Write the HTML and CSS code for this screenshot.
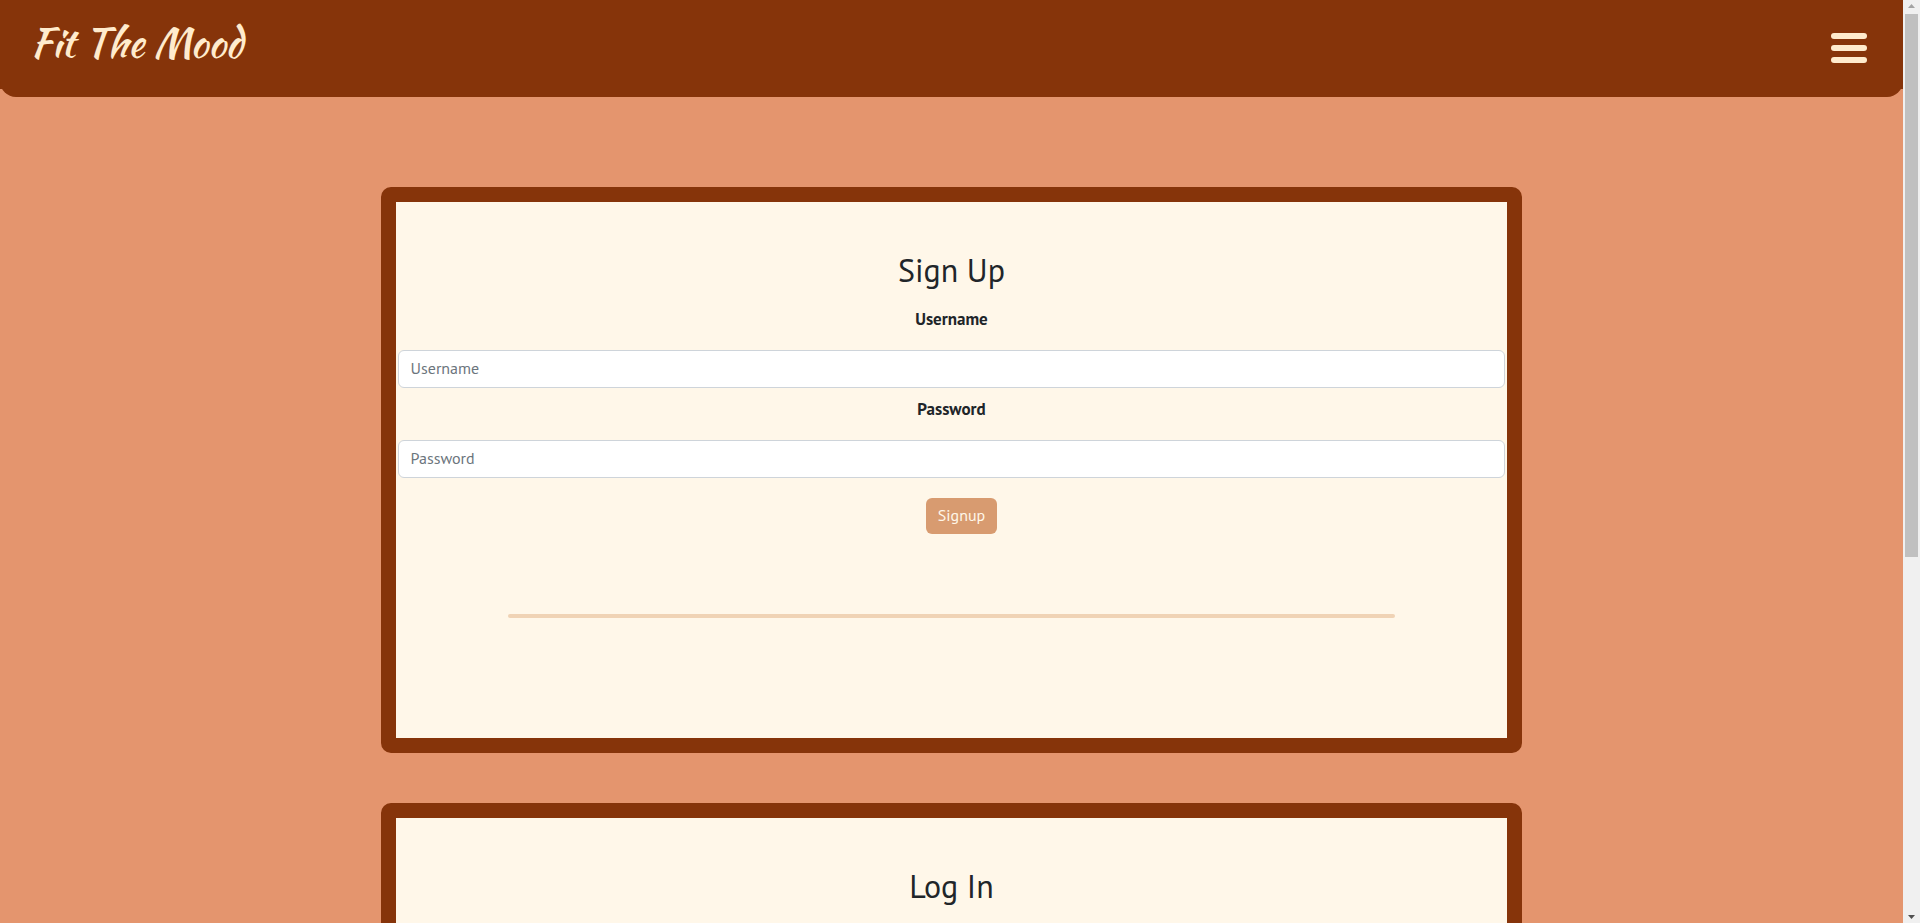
FILE: index.html
```html
<!DOCTYPE html>
<html lang="en">
<head>
<meta charset="utf-8">
<meta name="viewport" content="width=device-width, initial-scale=1">
<title>Fit The Mood</title>
<link rel="stylesheet" href="styles.css">
</head>
<body>
<div class="window">
  <div class="page">
    <header class="header">
      <nav class="navbar">
        <a class="logo" href="#">Fit The Mood</a>
        <button class="menu" type="button" aria-label="Menu">
          <span class="menu-bar"></span>
          <span class="menu-bar"></span>
          <span class="menu-bar"></span>
        </button>
      </nav>
    </header>
    <main class="cards">
      <section class="card">
        <h2 class="card-title">Sign Up</h2>
        <form class="form">
          <label class="label" for="signup-username">Username</label>
          <input class="field" id="signup-username" type="text" placeholder="Username">
          <label class="label" for="signup-password">Password</label>
          <input class="field" id="signup-password" type="password" placeholder="Password">
          <button class="submit" type="button">Signup</button>
        </form>
        <hr class="rule">
      </section>
      <section class="card">
        <h2 class="card-title">Log In</h2>
      </section>
    </main>
  </div>
  <div class="scrollbar" aria-hidden="true">
    <svg class="arrow" viewBox="0 0 17 14"><path d="M5 8h7L8.500 4z" fill="#a3a3a3"/></svg>
    <div class="track"><div class="thumb"></div></div>
    <svg class="arrow" viewBox="0 0 17 14"><path d="M5 6h7L8.500 10z" fill="#505050"/></svg>
  </div>
</div>
</body>
</html>
```
FILE: styles.css
```css
* {
  box-sizing: border-box;
}

body {
  margin: 0;
  background: #e4956e;
  color: #212529;
  font-family: "Trebuchet MS", "PT Sans", "Fira Sans", "Open Sans", sans-serif;
  font-size: 16px;
  line-height: 24px;
}

.window {
  display: flex;
  height: 100vh;
}

.page {
  flex: 1;
  overflow: hidden;
}

.header {
  height: 89px;
  background: #86340a;
}

.navbar {
  display: flex;
  justify-content: space-between;
  align-items: flex-start;
  height: 97px;
  padding: 15px 36px 0 30px;
  border-radius: 0 0 16px 16px;
  background: #86340a;
}

.logo {
  color: #ffebcd;
  font-family: "Kaushan Script", Lato, cursive;
  font-size: 40px;
  font-weight: 400;
  line-height: 56px;
  text-decoration: none;
}

.menu {
  display: flex;
  flex-direction: column;
  gap: 6px;
  margin-top: 18px;
  padding: 0;
  border: 0;
  background: none;
}

.menu-bar {
  width: 36px;
  height: 6px;
  border-radius: 3px;
  background: #ffebcd;
}

.cards {
  display: flex;
  flex-direction: column;
  align-items: center;
  gap: 50px;
  padding-top: 98px;
}

.card {
  width: 60%;
  min-height: 566px;
  padding: 48px 2px;
  border: 15px solid #86340a;
  border-radius: 10px;
  background: #fff7e9;
}

.card-title {
  margin: 0 0 9px;
  font-size: 32px;
  font-weight: 400;
  line-height: 40px;
  text-align: center;
}

.form {
  display: flex;
  flex-direction: column;
  align-items: center;
}

.label {
  margin: 8px 0 19px;
  font-size: 17px;
  font-weight: 600;
}

.label + .field + .label {
  margin-top: 9px;
}

.field {
  width: 100%;
  height: 38px;
  padding: 5px 12px 7px;
  border: 1px solid #ced4da;
  border-radius: 6px;
  background: #fff;
  color: #212529;
  font: inherit;
}

.field::placeholder {
  color: #6c757d;
  opacity: 1;
}

.submit {
  height: 36px;
  margin: 20px 0 0 20px;
  padding: 5px 12px 7px;
  border: 0;
  border-radius: 6px;
  background: #d89b70;
  color: #fff7e9;
  font: inherit;
}

.rule {
  width: 80%;
  height: 4px;
  margin: 80px auto 0;
  border: 0;
  border-radius: 2px;
  background: #f0d3b5;
}

.scrollbar {
  display: flex;
  flex-direction: column;
  width: 17px;
  background: #f0f0f0;
}

.arrow {
  width: 17px;
  height: 14px;
}

.track {
  flex: 1;
  padding: 0 2px;
}

.thumb {
  height: 60.7%;
  background: #c0c0c0;
}
```
